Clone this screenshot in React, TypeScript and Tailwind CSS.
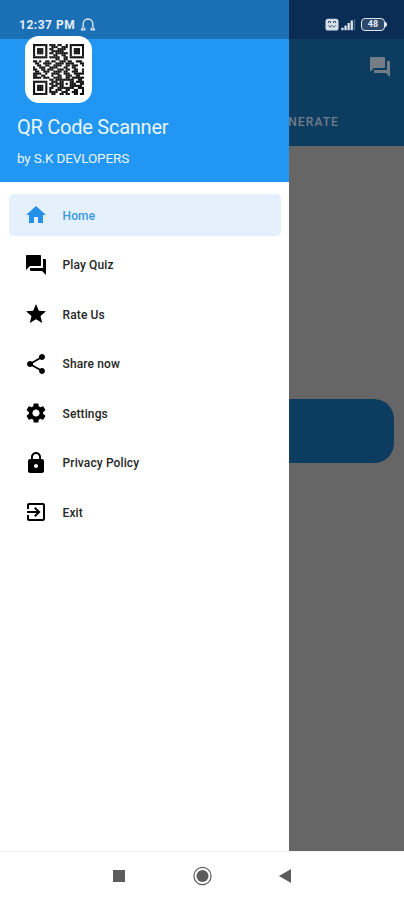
import type { ReactNode } from "react";
import {
  MdExitToApp,
  MdForum,
  MdHome,
  MdLock,
  MdSettings,
  MdShare,
  MdStar,
} from "react-icons/md";

const QR_ROWS = [
  "1111111011101100101111111",
  "1000001001110011101000001",
  "1011101011001111001011101",
  "1011101001111110001011101",
  "1011101011011111101011101",
  "1000001000110011001000001",
  "1111111011111001101111111",
  "0000000000011001100000000",
  "1101001101100111011001110",
  "0110011110011110111100011",
  "0011001100111100110111001",
  "1001110011110001100110000",
  "1100110111001110110011001",
  "0110011100111101100111001",
  "1111001001111001110011111",
  "1100110001001100111001100",
  "1111011100111100110111111",
  "0000000011011111111100110",
  "1111111001110110001101111",
  "1000001011011110101110011",
  "1011101001110110001111110",
  "1011101011001111111100111",
  "1011101010011100110011001",
  "1000001011110011100111001",
  "1111111001100110110011011",
];

function QrCode() {
  return (
    <svg className="size-[51px]" viewBox="0 0 25 25">
      {QR_ROWS.flatMap((row, y) =>
        [...row].map((cell, x) =>
          cell === "1" ? (
            <rect key={`${x}-${y}`} x={x} y={y} width="1.04" height="1.04" fill="#101010" />
          ) : null,
        ),
      )}
    </svg>
  );
}

function StatusBar() {
  return (
    <div className="absolute inset-x-0 top-0 flex h-[39px] items-start text-[#e4edf5]">
      <div className="flex h-full w-[289px] items-start bg-[#1b6fb4] pl-[19px] pt-[17px]">
        <span className="w-[57px] whitespace-nowrap text-[12px] leading-4 font-bold tracking-[0.5px]">
          12:37 PM
        </span>
        <svg className="ml-[4px] mt-px h-[14px] w-[16px]" viewBox="0 0 16 14" fill="none" stroke="currentColor" strokeWidth="1.3" strokeLinecap="round" strokeLinejoin="round">
          <path d="M4.8 11.8H1.4l1.8-3V5.8a4.8 4.8 0 0 1 9.6 0v3l1.8 3h-3.4M4.8 11.8v-1.6M11.2 11.8v-1.6" />
        </svg>
      </div>
      <div className="flex h-full flex-1 items-start bg-[#092d54] pl-[36px] pt-[18px]">
        <svg className="h-[13px] w-[14px]" viewBox="0 0 14 13">
          <rect x="0.5" y="0.8" width="13" height="11.8" rx="2.6" fill="#d6dfe8" />
          <path d="M3.5 5V3.5h2V5m3 0V3.5h2V5M3.5 7.3l1.7 2 1.5-2 2 2 2-2" fill="none" stroke="#405a78" strokeWidth="1" />
        </svg>
        <svg className="ml-[2px] h-[13px] w-[15px]" viewBox="0 0 15 13" fill="#dce5ee">
          <rect x="0.3" y="9.7" width="2.3" height="2.5" />
          <rect x="3.4" y="7.6" width="2.3" height="4.6" />
          <rect x="6.5" y="5" width="2.3" height="7.2" />
          <rect x="9.6" y="2.5" width="2.3" height="9.7" />
          <rect x="12.6" y="1.2" width="1.6" height="11" opacity=".3" />
        </svg>
        <div className="ml-[5px] flex items-center">
          <div className="flex h-[13px] w-[24px] items-center justify-center rounded-[4px] border-[1.5px] border-[#dce5ee] bg-[#2c496b] text-[9px] leading-none font-bold">
            48
          </div>
          <div className="h-[5px] w-[2px] rounded-r bg-[#dce5ee]" />
        </div>
      </div>
    </div>
  );
}

function MenuItem({ icon, label, active }: { icon: ReactNode; label: string; active?: boolean }) {
  return (
    <li
      className={`flex h-[42px] items-center rounded-[5px] pl-[14.5px] text-[12px] font-medium ${
        active ? "bg-[#e4f1fd] text-[#3a98e2]" : "text-[#262626]"
      }`}
    >
      <span className={`mr-[15px] text-[24px] ${active ? "text-[#2391e9]" : "text-black"}`}>{icon}</span>
      <span className="pt-px tracking-[0.12px]">{label}</span>
    </li>
  );
}

export default function App() {
  return (
    <div className="relative flex h-[900px] w-[404px] flex-col overflow-hidden bg-white font-[Roboto,sans-serif]">
      <div className="flex h-[851px]">
        <aside className="flex w-[289px] shrink-0 flex-col bg-white">
          <header className="h-[182px] bg-[#2196f3] pl-[17px] pt-[36px] text-[#eaf5ff]">
            <div className="relative z-10 ml-[8px] flex h-[67px] w-[67px] items-center justify-center rounded-[14px] bg-white">
              <QrCode />
            </div>
            <h1 className="mt-[12px] text-[20px] leading-6 tracking-[-0.25px]">QR Code Scanner</h1>
            <p className="mt-[11px] text-[13.5px] leading-4 tracking-[-0.15px]">by S.K DEVLOPERS</p>
          </header>
          <ul className="flex flex-col gap-[7.5px] pl-[9px] pr-[8px] pt-[12.4px]">
            <MenuItem icon={<MdHome />} label="Home" active />
            <MenuItem icon={<MdForum />} label="Play Quiz" />
            <MenuItem icon={<MdStar />} label="Rate Us" />
            <MenuItem icon={<MdShare />} label="Share now" />
            <MenuItem icon={<MdSettings />} label="Settings" />
            <MenuItem icon={<MdLock />} label="Privacy Policy" />
            <MenuItem icon={<MdExitToApp />} label="Exit" />
          </ul>
        </aside>
        <main className="flex min-w-0 flex-1 flex-col overflow-hidden bg-[#666]">
          <div className="h-[146px] bg-[#0d3c61] pt-[55px] text-[#727d86]">
            <MdForum className="ml-[79px] text-[24px]" />
            <div className="mt-[35px] flex w-[50px] justify-end whitespace-nowrap text-[12px] leading-4 font-medium tracking-[1.1px]">
              GENERATE
            </div>
          </div>
          <div className="mr-[10px] mt-[253px] h-[64px] rounded-r-[20px] bg-[#0d3c61]" />
        </main>
      </div>
      <StatusBar />
      <nav className="flex h-[49px] items-center border-t border-[#f3f3f3] bg-white pl-[113px] text-[#5c5c5c]">
        <div className="size-[12px] bg-current" />
        <svg className="ml-[67px] size-[20px]" viewBox="0 0 20 20">
          <circle cx="10.5" cy="10" r="8.6" fill="none" stroke="currentColor" strokeWidth="1.2" />
          <circle cx="10.5" cy="10" r="6" fill="currentColor" />
        </svg>
        <svg className="ml-[67px] h-[14px] w-[12px]" viewBox="0 0 12 14">
          <path d="M0 7 12 0v14Z" fill="currentColor" />
        </svg>
      </nav>
    </div>
  );
}
